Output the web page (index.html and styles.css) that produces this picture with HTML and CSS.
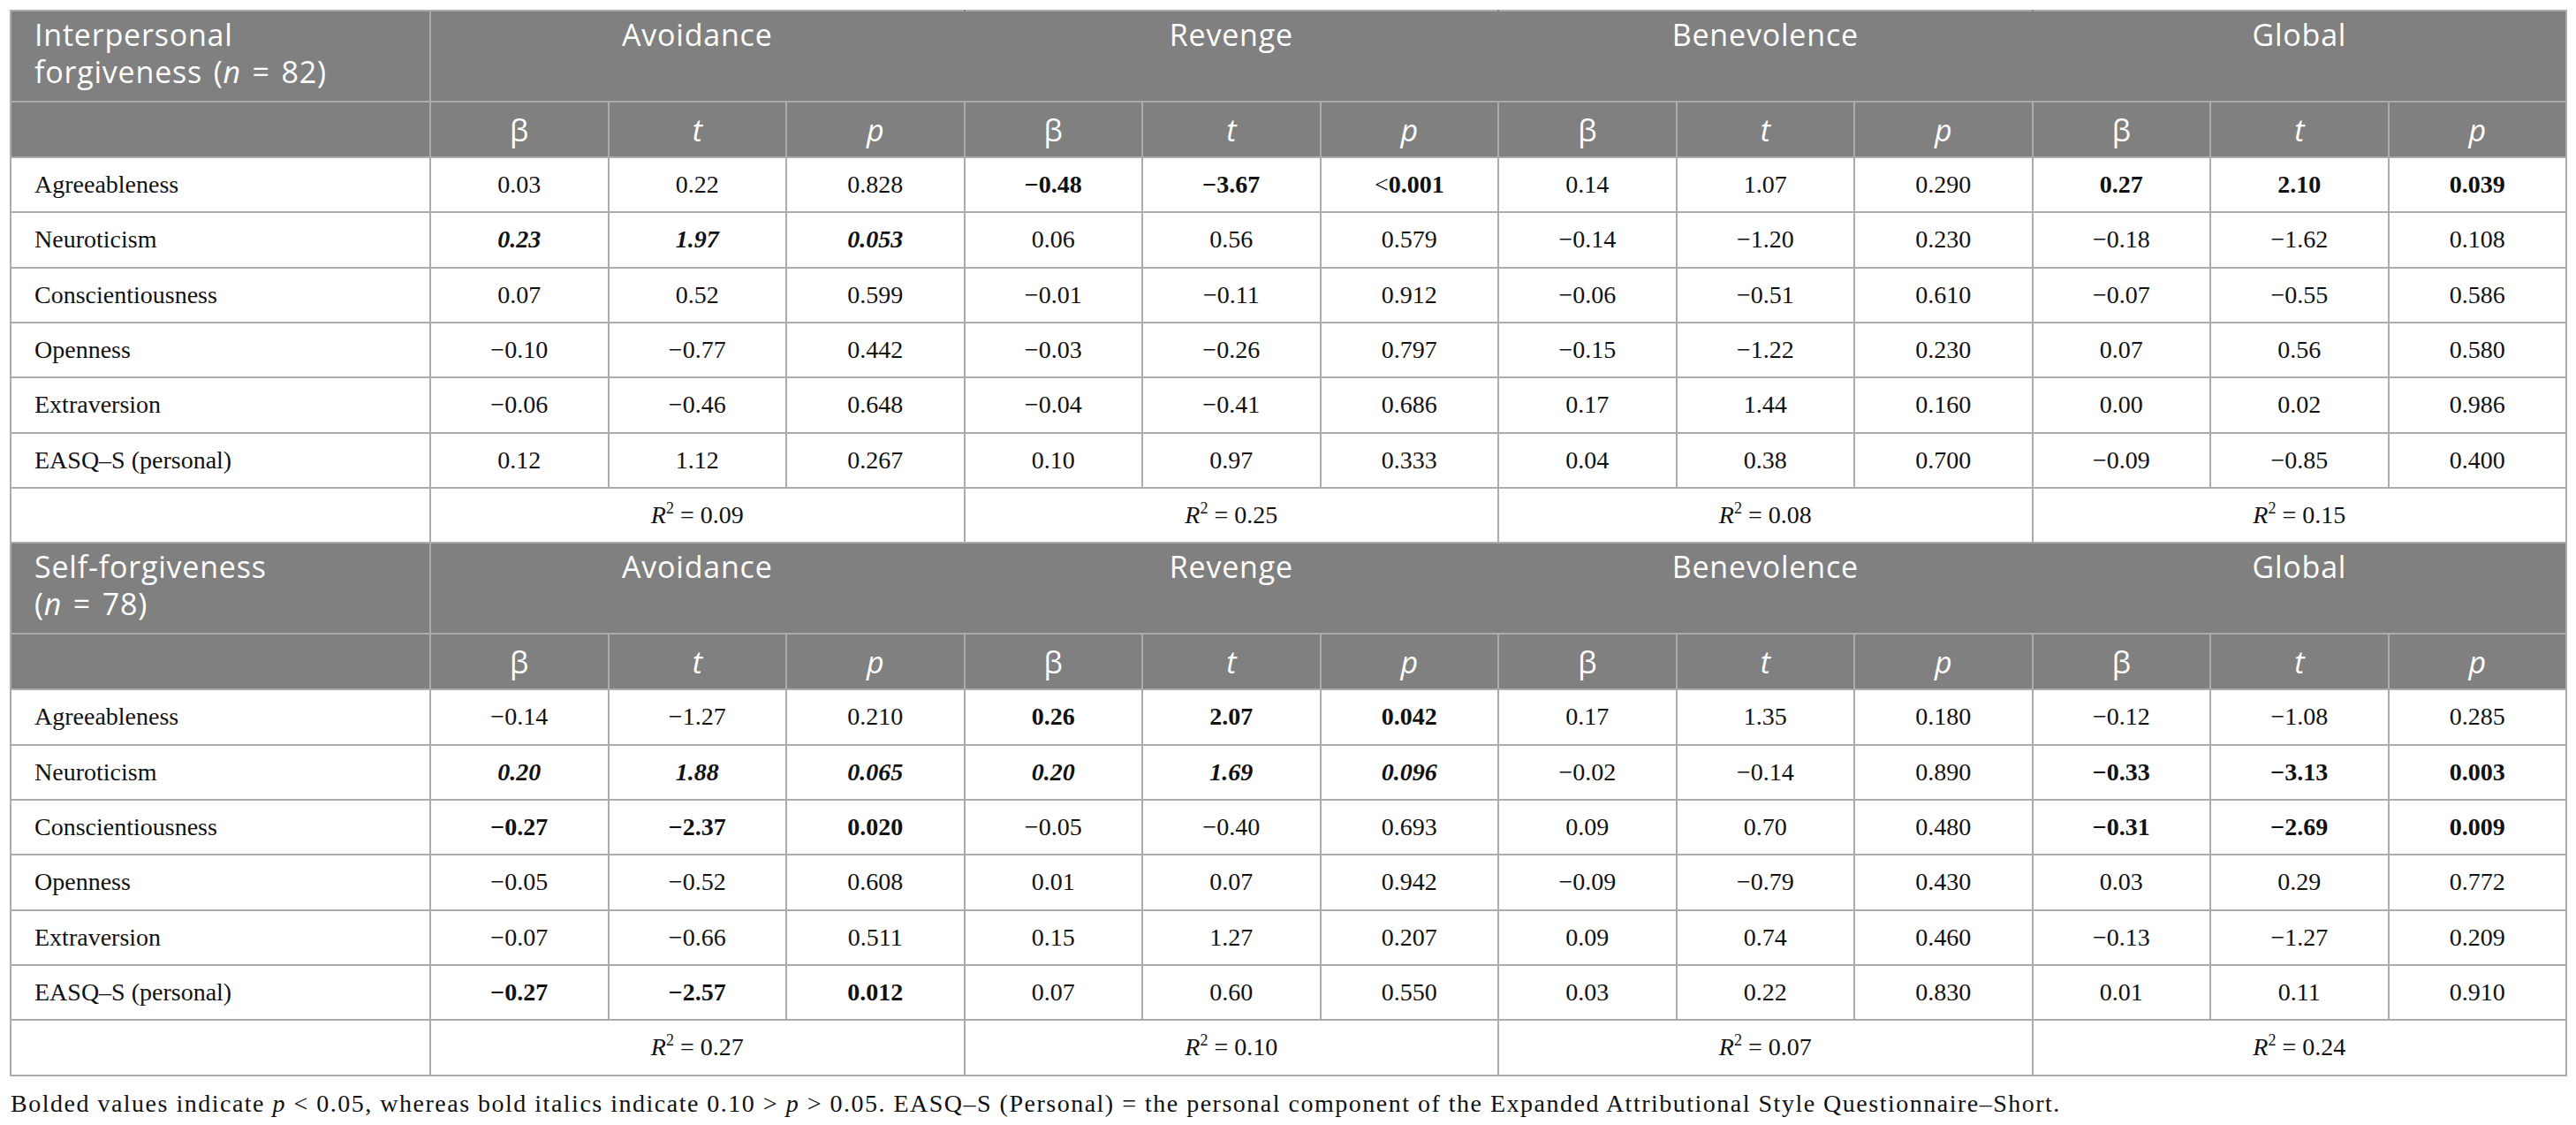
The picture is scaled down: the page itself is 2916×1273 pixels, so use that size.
FILE: index.html
```html
<!DOCTYPE html>
<html>
<head>
<meta charset="utf-8">
<link rel="stylesheet" href="styles.css">
</head>
<body>
<div class="page">
<table class="tbl">
  <colgroup>
    <col class="c-label">
    <col class="c-val"><col class="c-val"><col class="c-val">
    <col class="c-val"><col class="c-val"><col class="c-val">
    <col class="c-val"><col class="c-val"><col class="c-val">
    <col class="c-val"><col class="c-val"><col class="c-val">
  </colgroup>
  <tbody>
    <tr class="grp">
      <th class="lbl">Interpersonal<br>forgiveness (<i>n</i> = 82)</th>
      <th colspan="3">Avoidance</th>
      <th colspan="3">Revenge</th>
      <th colspan="3">Benevolence</th>
      <th colspan="3" class="last">Global</th>
    </tr>
    <tr class="sub">
      <th></th>
      <th>β</th><th><i>t</i></th><th><i>p</i></th>
      <th>β</th><th><i>t</i></th><th><i>p</i></th>
      <th>β</th><th><i>t</i></th><th><i>p</i></th>
      <th>β</th><th><i>t</i></th><th><i>p</i></th>
    </tr>
    <tr class="row">
      <td class="lbl">Agreeableness</td>
      <td>0.03</td><td>0.22</td><td>0.828</td>
      <td class="b">−0.48</td><td class="b">−3.67</td><td>&lt;<b>0.001</b></td>
      <td>0.14</td><td>1.07</td><td>0.290</td>
      <td class="b">0.27</td><td class="b">2.10</td><td class="b">0.039</td>
    </tr>
    <tr class="row">
      <td class="lbl">Neuroticism</td>
      <td class="bi">0.23</td><td class="bi">1.97</td><td class="bi">0.053</td>
      <td>0.06</td><td>0.56</td><td>0.579</td>
      <td>−0.14</td><td>−1.20</td><td>0.230</td>
      <td>−0.18</td><td>−1.62</td><td>0.108</td>
    </tr>
    <tr class="row">
      <td class="lbl">Conscientiousness</td>
      <td>0.07</td><td>0.52</td><td>0.599</td>
      <td>−0.01</td><td>−0.11</td><td>0.912</td>
      <td>−0.06</td><td>−0.51</td><td>0.610</td>
      <td>−0.07</td><td>−0.55</td><td>0.586</td>
    </tr>
    <tr class="row">
      <td class="lbl">Openness</td>
      <td>−0.10</td><td>−0.77</td><td>0.442</td>
      <td>−0.03</td><td>−0.26</td><td>0.797</td>
      <td>−0.15</td><td>−1.22</td><td>0.230</td>
      <td>0.07</td><td>0.56</td><td>0.580</td>
    </tr>
    <tr class="row">
      <td class="lbl">Extraversion</td>
      <td>−0.06</td><td>−0.46</td><td>0.648</td>
      <td>−0.04</td><td>−0.41</td><td>0.686</td>
      <td>0.17</td><td>1.44</td><td>0.160</td>
      <td>0.00</td><td>0.02</td><td>0.986</td>
    </tr>
    <tr class="row">
      <td class="lbl">EASQ–S (personal)</td>
      <td>0.12</td><td>1.12</td><td>0.267</td>
      <td>0.10</td><td>0.97</td><td>0.333</td>
      <td>0.04</td><td>0.38</td><td>0.700</td>
      <td>−0.09</td><td>−0.85</td><td>0.400</td>
    </tr>
    <tr class="row r2">
      <td class="lbl"></td>
      <td colspan="3"><i>R</i><sup>2</sup> = 0.09</td>
      <td colspan="3"><i>R</i><sup>2</sup> = 0.25</td>
      <td colspan="3"><i>R</i><sup>2</sup> = 0.08</td>
      <td colspan="3"><i>R</i><sup>2</sup> = 0.15</td>
    </tr>

    <tr class="grp">
      <th class="lbl">Self-forgiveness<br>(<i>n</i> = 78)</th>
      <th colspan="3">Avoidance</th>
      <th colspan="3">Revenge</th>
      <th colspan="3">Benevolence</th>
      <th colspan="3" class="last">Global</th>
    </tr>
    <tr class="sub">
      <th></th>
      <th>β</th><th><i>t</i></th><th><i>p</i></th>
      <th>β</th><th><i>t</i></th><th><i>p</i></th>
      <th>β</th><th><i>t</i></th><th><i>p</i></th>
      <th>β</th><th><i>t</i></th><th><i>p</i></th>
    </tr>
    <tr class="row">
      <td class="lbl">Agreeableness</td>
      <td>−0.14</td><td>−1.27</td><td>0.210</td>
      <td class="b">0.26</td><td class="b">2.07</td><td class="b">0.042</td>
      <td>0.17</td><td>1.35</td><td>0.180</td>
      <td>−0.12</td><td>−1.08</td><td>0.285</td>
    </tr>
    <tr class="row">
      <td class="lbl">Neuroticism</td>
      <td class="bi">0.20</td><td class="bi">1.88</td><td class="bi">0.065</td>
      <td class="bi">0.20</td><td class="bi">1.69</td><td class="bi">0.096</td>
      <td>−0.02</td><td>−0.14</td><td>0.890</td>
      <td class="b">−0.33</td><td class="b">−3.13</td><td class="b">0.003</td>
    </tr>
    <tr class="row">
      <td class="lbl">Conscientiousness</td>
      <td class="b">−0.27</td><td class="b">−2.37</td><td class="b">0.020</td>
      <td>−0.05</td><td>−0.40</td><td>0.693</td>
      <td>0.09</td><td>0.70</td><td>0.480</td>
      <td class="b">−0.31</td><td class="b">−2.69</td><td class="b">0.009</td>
    </tr>
    <tr class="row">
      <td class="lbl">Openness</td>
      <td>−0.05</td><td>−0.52</td><td>0.608</td>
      <td>0.01</td><td>0.07</td><td>0.942</td>
      <td>−0.09</td><td>−0.79</td><td>0.430</td>
      <td>0.03</td><td>0.29</td><td>0.772</td>
    </tr>
    <tr class="row">
      <td class="lbl">Extraversion</td>
      <td>−0.07</td><td>−0.66</td><td>0.511</td>
      <td>0.15</td><td>1.27</td><td>0.207</td>
      <td>0.09</td><td>0.74</td><td>0.460</td>
      <td>−0.13</td><td>−1.27</td><td>0.209</td>
    </tr>
    <tr class="row">
      <td class="lbl">EASQ–S (personal)</td>
      <td class="b">−0.27</td><td class="b">−2.57</td><td class="b">0.012</td>
      <td>0.07</td><td>0.60</td><td>0.550</td>
      <td>0.03</td><td>0.22</td><td>0.830</td>
      <td>0.01</td><td>0.11</td><td>0.910</td>
    </tr>
    <tr class="row r2">
      <td class="lbl"></td>
      <td colspan="3"><i>R</i><sup>2</sup> = 0.27</td>
      <td colspan="3"><i>R</i><sup>2</sup> = 0.10</td>
      <td colspan="3"><i>R</i><sup>2</sup> = 0.07</td>
      <td colspan="3"><i>R</i><sup>2</sup> = 0.24</td>
    </tr>
  </tbody>
</table>
<p class="note">Bolded values indicate <i>p</i> &lt; 0.05, whereas bold italics indicate 0.10 &gt; <i>p</i> &gt; 0.05. EASQ–S (Personal) = the personal component of the Expanded Attributional Style Questionnaire–Short.</p>
</div>
</body>
</html>
```

FILE: styles.css
```css
html, body {
  margin: 0;
  padding: 0;
  background: #ffffff;
}

.page {
  padding: 11px 0 0 11px;
}

.tbl {
  border-collapse: collapse;
  table-layout: fixed;
  width: 2893px;
  font-family: "Liberation Serif", "Times New Roman", serif;
  font-size: 28px;
  color: #111111;
}

.c-label { width: 475px; }
.c-val { width: 201.5px; }

.tbl th,
.tbl td {
  border: 2px solid #ababab;
  padding: 0;
}

.grp th {
  background: #808080;
  color: #ffffff;
  font-family: "Open Sans", "Liberation Sans", sans-serif;
  font-weight: 400;
  font-size: 34px;
  line-height: 42px;
  letter-spacing: 0.8px;
  word-spacing: 3px;
  text-align: center;
  vertical-align: top;
  padding: 5px 0 12px 0;
  border-left-color: #808080;
  border-right-color: #808080;
}

.grp th.lbl {
  text-align: left;
  padding-left: 26px;
  border-left-color: #ababab;
  border-right-color: #ababab;
}

.grp th.last {
  border-right-color: #ababab;
}

.sub th {
  background: #808080;
  color: #ffffff;
  font-family: "Open Sans", "Liberation Sans", sans-serif;
  font-weight: 400;
  font-size: 34px;
  height: 61px;
  text-align: center;
  vertical-align: middle;
}

.row td {
  height: 60.33px;
  text-align: center;
  vertical-align: middle;
  background: #ffffff;
}

.row td.lbl {
  text-align: left;
  padding-left: 26px;
}

.b { font-weight: 700; }
.b b { font-weight: 700; }
.bi { font-weight: 700; font-style: italic; }

.r2 sup {
  font-size: 18px;
  line-height: 0;
  vertical-align: 11px;
}

.note {
  margin: 15px 0 0 1px;
  font-family: "Liberation Serif", "Times New Roman", serif;
  font-size: 28px;
  letter-spacing: 1.5px;
  color: #111111;
}
```
